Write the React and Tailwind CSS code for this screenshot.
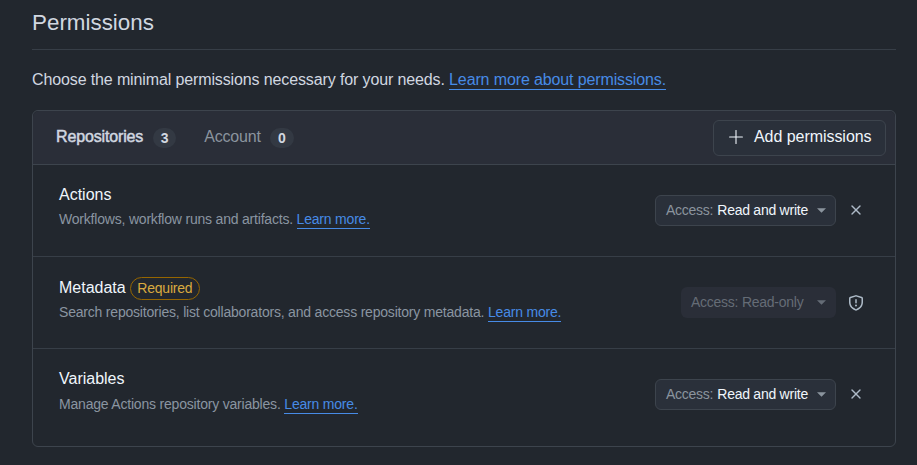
import React from "react";
import { Plus, X } from "lucide-react";

const Caret = ({ className }) => (
  <svg width="9" height="5" viewBox="0 0 10 5" className={className} fill="currentColor">
    <path d="M0 0h10L5 5z" />
  </svg>
);

const ShieldAlert = () => (
  <svg width="16" height="16" viewBox="0 0 16 16" fill="#adbac7">
    <path d="M8.533.133a1.75 1.75 0 0 0-1.066 0l-5.25 1.68A1.75 1.75 0 0 0 1 3.48V7c0 1.566.32 3.182 1.303 4.682.983 1.498 2.585 2.813 5.032 3.855a1.7 1.7 0 0 0 1.33 0c2.447-1.042 4.049-2.357 5.032-3.855C14.68 10.182 15 8.566 15 7V3.48a1.75 1.75 0 0 0-1.217-1.667Zm-.61 1.429a.25.25 0 0 1 .153 0l5.25 1.68a.25.25 0 0 1 .174.238V7c0 1.358-.275 2.666-1.057 3.86-.784 1.194-2.121 2.34-4.366 3.297a.2.2 0 0 1-.154 0c-2.245-.956-3.582-2.104-4.366-3.298C2.775 9.666 2.5 8.36 2.5 7V3.48a.25.25 0 0 1 .174-.237Z" />
    <path d="M9 10.5a1 1 0 1 1-2 0 1 1 0 0 1 2 0Zm-.25-5.75a.75.75 0 0 0-1.5 0v3a.75.75 0 0 0 1.5 0Z" />
  </svg>
);

const LearnMore = () => (
  <a className="text-[#478be6] border-b border-[#478be6] pb-px tracking-[-0.2px]">Learn more.</a>
);

const AccessSelect = () => (
  <div className="flex items-center h-[31px] w-[181px] pl-[10px] pb-[2px] rounded-md border border-[#3d444d] bg-[#2a303a] text-sm tracking-[-0.25px]">
    <span className="text-[#8b949e]">Access:</span>
    <span className="text-[#f0f6fc] ml-1">Read and write</span>
    <Caret className="ml-[9px] mt-[2px] text-[#8b949e]" />
  </div>
);

const rows = [
  { name: "Actions", desc: "Workflows, workflow runs and artifacts.", row: "h-[92px] border-b border-[#373e47]", left: "mb-[10px]", gap: "mt-[2px]" },
  { name: "Metadata", desc: "Search repositories, list collaborators, and access repository metadata.", required: true, row: "h-[92px] border-b border-[#373e47]", left: "mb-[8px]", gap: "mt-[2px]" },
  { name: "Variables", desc: "Manage Actions repository variables.", row: "h-[97px] pb-[6px]", left: "mb-[8px]", gap: "mt-[3px]" },
];

export default function App() {
  return (
    <div
      className="h-[465px] bg-[#22272e] pl-8 pr-[21px] pt-[8px] overflow-hidden"
      style={{ fontFamily: '"Liberation Sans", Arial, sans-serif' }}
    >
      <h2 className="text-[22.4px] leading-[30px] text-[#d1d7e0] pb-[11px] border-b border-[#373e47]">Permissions</h2>
      <p className="text-base leading-6 text-[#d1d7e0] mt-[18px] tracking-[-0.125px]">
        Choose the minimal permissions necessary for your needs.{" "}
        <a className="text-[#478be6] border-b border-[#478be6] pb-px">Learn more about permissions.</a>
      </p>
      <div className="mt-[18px] rounded-md border border-[#3d444d] h-[337px]">
        <div className="flex items-center justify-between h-[54px] pl-[23px] pr-[9px] bg-[#2a2e38] rounded-t-md border-b border-[#3d444d]">
          <div className="flex items-center text-base tracking-[-0.15px]">
            <span className="text-[#d1d7e0] [-webkit-text-stroke:0.5px_#d1d7e0] pb-[2px]">Repositories</span>
            <span className="ml-[10px] h-5 w-[23px] flex items-center justify-center rounded-full bg-[#333943] text-[#d1d7e0] text-sm font-bold">3</span>
            <span className="ml-7 text-[#8b949e] pb-[2px]">Account</span>
            <span className="ml-[9px] h-5 w-6 flex items-center justify-center rounded-full bg-[#333943] text-[#d1d7e0] text-sm font-bold">0</span>
          </div>
          <button className="flex items-center h-9 w-[173px] pl-[11px] pb-[2px] rounded-md border border-[#3d444d] bg-[#2a303a] text-base text-[#f0f6fc] tracking-[-0.05px]">
            <Plus size={22} strokeWidth={1.2} />
            <span className="ml-[7px]">Add permissions</span>
          </button>
        </div>
        {rows.map((r) => (
          <div key={r.name} className={`flex items-center justify-between pl-[26px] pr-[31px] ${r.row}`}>
            <div className={r.left}>
              <div className="flex items-center h-6 text-base text-[#f0f6fc]">
                {r.name}
                {r.required && (
                  <span className="ml-1 mt-[2px] h-[23px] px-[6.5px] pb-px flex items-center rounded-full border border-[#966600] text-sm tracking-[-0.2px] text-[#daaa3f]">Required</span>
                )}
              </div>
              <p className={`${r.gap} text-sm leading-5 text-[#8a95a1] tracking-[-0.2px]`}>
                {r.desc} <LearnMore />
              </p>
            </div>
            <div className="flex items-center gap-3">
              {r.required ? (
                <>
                  <div className="flex items-center h-[31px] w-[155px] pl-[10px] pb-[2px] rounded-md bg-[#2a2e38] text-sm tracking-[-0.25px] text-[#656c76]">
                    Access: Read-only
                    <Caret className="ml-[14px] mt-[2px]" />
                  </div>
                  <span className="w-4"><ShieldAlert /></span>
                </>
              ) : (
                <>
                  <AccessSelect />
                  <X size={16} strokeWidth={2} className="text-[#adbac7] mb-[2px]" />
                </>
              )}
            </div>
          </div>
        ))}
      </div>
    </div>
  );
}
